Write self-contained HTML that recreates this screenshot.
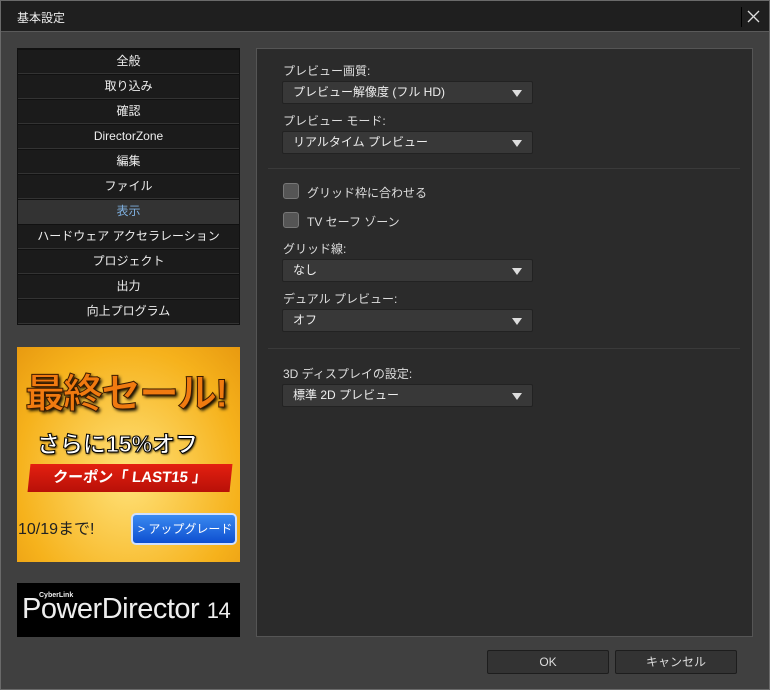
<!DOCTYPE html>
<html><head><meta charset="utf-8"><style>
*{margin:0;padding:0;box-sizing:border-box}
body{width:770px;height:690px;background:#404040;font-family:"Liberation Sans","Noto Sans CJK JP",sans-serif;font-size:12px;color:#ddd;position:relative;overflow:hidden}
.frame{position:absolute;left:0;top:0;width:770px;height:690px;border:1px solid #6a6a6a}
.title{position:absolute;left:1px;top:1px;width:768px;height:31px;background:#1f1f1f;border-bottom:1px solid #5a5a5a}
.title span{position:absolute;left:16px;top:8px;font-size:12px;color:#eee}
.x{position:absolute;left:740px;top:6px;width:22px;height:20px;border-left:1px solid #000}
.nav{position:absolute;left:17px;top:48px;width:223px;border:1px solid #111}
.nav div{height:25px;background:#1b1b1b;border-bottom:1px solid #333;border-top:1px solid #111;text-align:center;line-height:23px;font-size:12px;color:#eee}
.nav div.sel{background:#333;color:#7fb0e0}
.ad{position:absolute;left:17px;top:347px;width:223px;height:215px;background:radial-gradient(ellipse at 50% 60%,#ffe27a,#f6b21c 70%,#e89a10);overflow:hidden}
.logo{position:absolute;left:17px;top:583px;width:223px;height:54px;background:#000;color:#eee}
.panel{position:absolute;left:256px;top:48px;width:497px;height:589px;background:#2b2b2b;border:1px solid #555}
.lbl{position:absolute;left:26px;font-size:12px;color:#ddd}
.dd{position:absolute;left:25px;width:251px;height:23px;background:#383838;border:1px solid #222;border-radius:2px;padding-left:10px;line-height:21px;color:#eee}
.dd:after{content:"";position:absolute;right:10px;top:8px;border-left:5px solid transparent;border-right:5px solid transparent;border-top:7px solid #ddd}
.hr{position:absolute;left:11px;width:472px;height:1px;background:#111;border-bottom:1px solid #3a3a3a}
.cb{position:absolute;left:26px;width:16px;height:16px;background:#555;border:1px solid #777;border-radius:3px}
.btn{position:absolute;top:650px;width:122px;height:24px;background:#333;border:1px solid #1d1d1d;border-radius:2px;text-align:center;line-height:22px;color:#ddd}
</style></head><body>
<div class="frame"></div>
<div class="title"><span>基本設定</span>
<div class="x"><svg width="22" height="20"><path d="M6 4L17 15M17 4L6 15" stroke="#ddd" stroke-width="1.3"/></svg></div></div>
<div class="nav">
<div>全般</div><div>取り込み</div><div>確認</div><div>DirectorZone</div><div>編集</div><div>ファイル</div><div class="sel">表示</div><div>ハードウェア アクセラレーション</div><div>プロジェクト</div><div>出力</div><div>向上プログラム</div>
</div>
<div class="ad">
<div style="position:absolute;left:8px;top:14px;font-size:40px;font-weight:bold;color:#f07a10;-webkit-text-stroke:1px #3a1a00;text-shadow:2px 2px 3px #000;letter-spacing:-2px;white-space:nowrap">最終セール!</div>
<div style="position:absolute;left:20px;top:78px;font-size:23px;font-weight:bold;color:#fff;-webkit-text-stroke:1px #000;text-shadow:1px 1px 2px #000;white-space:nowrap">さらに15%オフ</div>
<div style="position:absolute;left:12px;top:117px;width:202px;height:28px;background:linear-gradient(#e42010,#b81008);transform:skewX(-6deg);text-align:center;line-height:28px;color:#fff;font-weight:bold;font-size:15px;white-space:nowrap">クーポン「 LAST15 」</div>
<div style="position:absolute;left:1px;top:168px;font-size:16px;color:#222;white-space:nowrap">10/19まで!</div>
<div style="position:absolute;left:114px;top:166px;width:106px;height:32px;background:linear-gradient(#3a8af0,#0e4fd0);border:2px solid #cfe0ff;border-radius:5px;color:#fff;font-size:12px;line-height:28px;padding-left:5px;white-space:nowrap;overflow:hidden">&gt; アップグレード</div>
</div>
<div class="logo"><div style="position:absolute;left:22px;top:9px;font-size:7px;font-weight:bold">CyberLink</div><div style="position:absolute;left:5px;top:10px;font-size:29px;letter-spacing:-0.5px;white-space:nowrap">PowerDirector <span style="font-size:22px">14</span></div></div>
<div class="panel">
<div class="lbl" style="top:13px">プレビュー画質:</div>
<div class="dd" style="top:32px">プレビュー解像度 (フル HD)</div>
<div class="lbl" style="top:63px">プレビュー モード:</div>
<div class="dd" style="top:82px">リアルタイム プレビュー</div>
<div class="hr" style="top:119px"></div>
<div class="cb" style="top:134px"></div><div class="lbl" style="left:50px;top:135px">グリッド枠に合わせる</div>
<div class="cb" style="top:163px"></div><div class="lbl" style="left:50px;top:164px">TV セーフ ゾーン</div>
<div class="lbl" style="top:191px">グリッド線:</div>
<div class="dd" style="top:210px">なし</div>
<div class="lbl" style="top:241px">デュアル プレビュー:</div>
<div class="dd" style="top:260px">オフ</div>
<div class="hr" style="top:299px"></div>
<div class="lbl" style="top:316px">3D ディスプレイの設定:</div>
<div class="dd" style="top:335px">標準 2D プレビュー</div>
</div>
<div class="btn" style="left:487px">OK</div>
<div class="btn" style="left:615px">キャンセル</div>
</body></html>
